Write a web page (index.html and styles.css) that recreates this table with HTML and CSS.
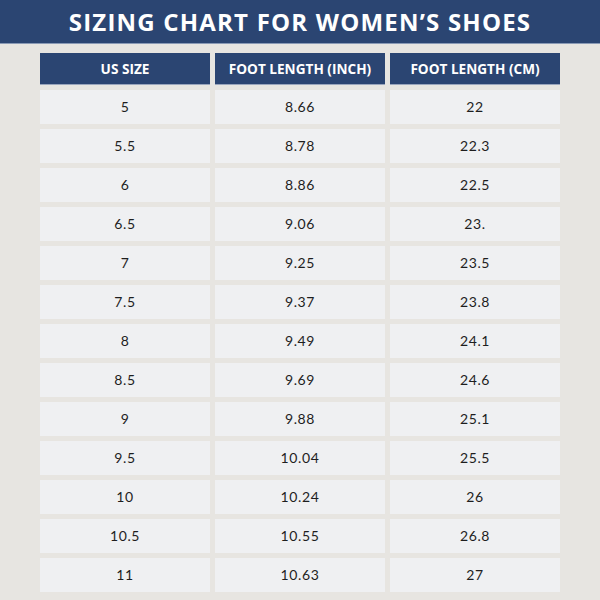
FILE: index.html
```html
<!DOCTYPE html>
<html lang="en">
<head>
<meta charset="utf-8">
<title>Sizing Chart for Women's Shoes</title>
<link rel="stylesheet" href="styles.css">
</head>
<body>
<header class="title-bar">
  <h1 class="title">SIZING CHART FOR WOMEN’S SHOES</h1>
</header>
<main class="chart">
  <div class="cell head">US SIZE</div>
  <div class="cell head">FOOT LENGTH (INCH)</div>
  <div class="cell head">FOOT LENGTH (CM)</div>

  <div class="cell">5</div><div class="cell">8.66</div><div class="cell">22</div>
  <div class="cell">5.5</div><div class="cell">8.78</div><div class="cell">22.3</div>
  <div class="cell">6</div><div class="cell">8.86</div><div class="cell">22.5</div>
  <div class="cell">6.5</div><div class="cell">9.06</div><div class="cell">23.</div>
  <div class="cell">7</div><div class="cell">9.25</div><div class="cell">23.5</div>
  <div class="cell">7.5</div><div class="cell">9.37</div><div class="cell">23.8</div>
  <div class="cell">8</div><div class="cell">9.49</div><div class="cell">24.1</div>
  <div class="cell">8.5</div><div class="cell">9.69</div><div class="cell">24.6</div>
  <div class="cell">9</div><div class="cell">9.88</div><div class="cell">25.1</div>
  <div class="cell">9.5</div><div class="cell">10.04</div><div class="cell">25.5</div>
  <div class="cell">10</div><div class="cell">10.24</div><div class="cell">26</div>
  <div class="cell">10.5</div><div class="cell">10.55</div><div class="cell">26.8</div>
  <div class="cell">11</div><div class="cell">10.63</div><div class="cell">27</div>
</main>
</body>
</html>
```
FILE: styles.css
```css
html, body {
  margin: 0;
  padding: 0;
}
body {
  width: 600px;
  height: 600px;
  overflow: hidden;
  background: #e7e5e1;
  font-family: "Lato", "Liberation Sans", sans-serif;
}
.title-bar {
  height: 44px;
  background: #2b4572;
  border-bottom: 1px solid #8a9ab5;
  box-sizing: border-box;
  display: flex;
  align-items: center;
  justify-content: center;
}
.title {
  margin: 0;
  color: #ffffff;
  font-family: "Open Sans", "Liberation Sans", sans-serif;
  font-weight: 700;
  font-size: 24px;
  letter-spacing: 1.2px;
  line-height: 1;
}
.chart {
  margin: 9px 40px 0;
  display: grid;
  grid-template-columns: repeat(3, 170px);
  grid-template-rows: 32px;
  grid-auto-rows: 34px;
  column-gap: 5px;
  row-gap: 5px;
}
.cell {
  background: #eff0f2;
  color: #1e1e1e;
  font-size: 14px;
  letter-spacing: 0.6px;
  padding-bottom: 2px;
  box-sizing: border-box;
  display: flex;
  align-items: center;
  justify-content: center;
}
.cell.head {
  background: #2b4572;
  color: #ffffff;
  font-family: "Open Sans", "Liberation Sans", sans-serif;
  font-weight: 700;
  font-size: 13.6px;
  letter-spacing: 0;
  padding-bottom: 0;
  border-bottom: 1px solid #9aa6bd;
}
```
